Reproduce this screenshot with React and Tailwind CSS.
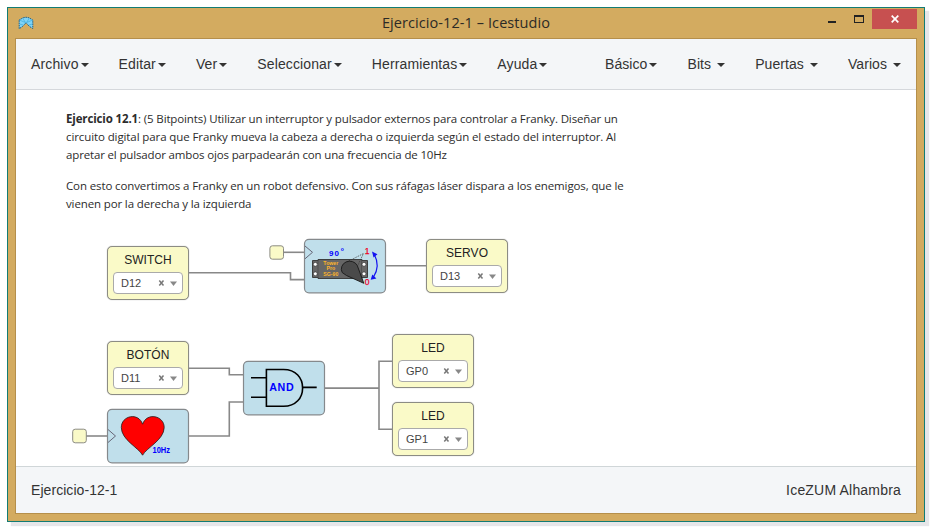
import React from 'react';

const leftMenus = ['Archivo', 'Editar', 'Ver', 'Seleccionar', 'Herramientas', 'Ayuda'];
const rightMenus = ['Básico', 'Bits ', 'Puertas ', 'Varios '];

const pinBlocks = [
  { label: 'SWITCH', pin: 'D12', place: 'left-[91px] top-[156px]' },
  { label: 'SERVO', pin: 'D13', place: 'left-[410px] top-[149px]' },
  { label: 'BOTÓN', pin: 'D11', place: 'left-[91px] top-[251px]' },
  { label: 'LED', pin: 'GP0', place: 'left-[376px] top-[244px]' },
  { label: 'LED', pin: 'GP1', place: 'left-[376px] top-[312px]' },
];

function Menu({ label }) {
  return (
    <button className="flex items-center text-[14px] leading-5 whitespace-pre text-[#333]">
      <span>{label}</span>
      <span className="mt-[2px] ml-[2px] h-0 w-0 border-x-4 border-t-4 border-x-transparent border-t-[#333]" />
    </button>
  );
}

function PinBlock({ label, pin, place }) {
  return (
    <div className={`absolute ${place} flex h-[54px] w-[82px] flex-col items-center rounded-[5px] border border-[#8c8c84] bg-[#fafac8] shadow-[0_0_1px_#999]`}>
      <div className="mt-[5px] text-[12px] leading-4 tracking-[0.05px] text-[#222]">{label}</div>
      <div className="mt-[4px] flex h-[22px] w-[70px] items-center rounded-[4px] border border-[#aaa] bg-white pl-[7px]">
        <span className="w-[37px] text-[11px] leading-4 text-[#444]">{pin}</span>
        <svg width="24" height="8" viewBox="0 0 24 8">
          <path d="M1.300 1.500l4.200 5M5.500 1.500l-4.200 5" stroke="#777" strokeWidth="1.500" />
          <path d="M12 2.600h7l-3.500 4.400z" fill="#888" />
        </svg>
      </div>
    </div>
  );
}

function Circuit() {
  return (
    <svg className="absolute inset-0" width="900" height="376" viewBox="16 90 900 376" fontFamily="'Liberation Sans', Arial, sans-serif">
      <g fill="none" stroke="#888" strokeWidth="1.600">
        <path d="M188 272.700H290.500V279.600H304" />
        <path d="M283 252.300H304" />
        <path d="M385 265.700H427" />
        <path d="M188 368.200H229.300V374.800H244" />
        <path d="M188 436H229.300V402H244" />
        <path d="M86 436H108" />
        <path d="M324 388.100H379M393 361.200H379V429.200H393" />
      </g>
      <g stroke="#8c8c84" fill="#fafac8">
        <rect x="269.900" y="245.800" width="13.600" height="13.400" rx="2.500" />
        <rect x="72.700" y="429.200" width="13.600" height="13.600" rx="2.500" />
      </g>
      <g stroke="#85898c" strokeWidth="1.200" fill="#c0dfeb">
        <rect x="304.500" y="239.300" width="81" height="53.500" rx="4.500" />
        <rect x="107.500" y="409.300" width="81" height="53.500" rx="4.500" />
        <rect x="243.500" y="361.300" width="81" height="53.500" rx="4.500" />
      </g>
      <g fill="none" stroke="#667" strokeWidth="1">
        <path d="M305 246L312.500 252.300L305 258.800" />
        <path d="M108 429.500L115.500 436L108 442.500" />
      </g>

      {/* servo motor */}
      <g>
        <path d="M312.500 260.500H318V259.500H362V260.500H367.500V277.500H362V278.500H318V277.500H312.500Z" fill="#666" stroke="#333" strokeWidth="0.900" />
        <path d="M318 260V278M361.500 260V278" stroke="#444" strokeWidth="0.600" />
        <g fill="#fff" stroke="#222" strokeWidth="0.500">
          <circle cx="315.300" cy="264.300" r="1.900" />
          <circle cx="315.300" cy="273.800" r="1.900" />
          <circle cx="364" cy="264.300" r="1.900" />
          <circle cx="364" cy="273.800" r="1.900" />
        </g>
        <path d="M346.500 262.200L363.500 253.500L357.500 266" fill="none" stroke="#333" strokeWidth="0.700" strokeDasharray="1.500 1" />
        <path d="M342.200 272.500A8 7.500 0 1 1 357.300 265.600L363.800 283.300L346.500 275.500Z" fill="#4a4a4a" stroke="#181818" strokeWidth="0.900" />
        <g fill="#ffb52a" fontSize="5.200" fontWeight="700" textAnchor="middle">
          <text x="330.800" y="265">Tower</text>
          <text x="330.800" y="270.300">Pro</text>
          <text x="330.800" y="276">SG-90</text>
        </g>
        <text x="329" y="256" fontSize="8" fontWeight="700" textLength="10" fill="#00f">90</text>
        <text x="340.700" y="251" fontSize="5" fontWeight="700" fill="#00f">o</text>
        <text x="364.700" y="254.300" fontSize="8.500" stroke="#f0001c" strokeWidth="0.250" fill="#f0001c">1</text>
        <text x="364.700" y="285" fontSize="8.500" stroke="#f00028" strokeWidth="0.250" fill="#f00028">0</text>
        <path d="M374.300 254.500Q380.500 266 373.500 277" fill="none" stroke="#1414f0" strokeWidth="1.200" />
        <path d="M372 251.500L377.500 254.300L373.500 257.500ZM370.700 279.700L372.300 274.600L376.400 278.500Z" fill="#1414f0" />
      </g>

      {/* AND gate */}
      <g fill="none" stroke="#000" strokeWidth="1.600">
        <path d="M266.400 369.500H283.500C296 369.500 302.600 378 302.600 387.900S296 406.300 283.500 406.300H266.400Z" />
        <path d="M251 377.800H266M251 397.300H266M303 387.400H316.700" />
      </g>
      <text x="269.300" y="391" fontSize="10.700" fontWeight="700" letterSpacing="0.600" fill="#00f">AND</text>

      {/* 10 Hz heartbeat */}
      <path d="M142.600 455.200C138.500 447.500 121.500 440 121.300 427.500C121.300 415.500 138.500 412 142.600 424.200C146.700 412 164.200 415.500 164.200 427.500C164 440 146.700 447.500 142.600 455.200Z" fill="#f00" stroke="#222" strokeWidth="0.800" />
      <text x="152.500" y="453" fontSize="8.500" fontWeight="700" textLength="17.500" lengthAdjust="spacingAndGlyphs" fill="#00f">10Hz</text>
    </svg>
  );
}

export default function App() {
  return (
    <div className="h-[530px] w-[933px] overflow-hidden bg-white p-[7px] font-['Liberation_Sans',Arial,sans-serif]">
      <div className="flex h-[515px] w-[918px] flex-col border border-[#127c74] bg-[#d3ab60] px-[7px] pb-[7px] shadow-[4px_4px_1px_#e6e6e9]">
        <header className="grid h-[30px] shrink-0 grid-cols-[1fr_auto_1fr] items-start">
          <svg className="mt-[8px] ml-[3px]" width="16" height="14" viewBox="0 0 16 14">
            <path d="M1.200 4L5 1.800L8 1.200L11 1.800L14.800 4V12.500L11.500 10.500L8 6.800L4.500 10.500L1.200 12.700Z" fill="#7fd3f7" stroke="#1d5f86" strokeWidth="1" strokeDasharray="1.500 0.800" />
            <path d="M1.500 4L6 6L8 6.500L10 6L14.500 4M5 2.500L7 6M11 2.500L9 6M1.500 8L5 9M14.500 8L11 9" fill="none" stroke="#3eaede" strokeWidth="0.700" />
          </svg>
          <h1 className="mt-[5px] font-['Open_Sans',sans-serif] text-[14.500px] leading-[20px] tracking-[0.080px] text-[#2b2a26]">Ejercicio-12-1 – Icestudio</h1>
          <div className="mt-px flex justify-end">
            <svg width="44" height="20" viewBox="0 0 44 20">
              <path d="M0 12H8V14H0Z" fill="#222" />
              <path d="M26 6H36V14H26ZM27 8V13H35V8Z" fillRule="evenodd" fill="#222" />
            </svg>
            <div className="flex h-[20px] w-[45px] items-center justify-center bg-[#c75050]">
              <svg width="8" height="8" viewBox="0 0 8 8">
                <path d="M0.700 0.700L7.300 7.300M7.300 0.700L0.700 7.300" stroke="#fff" strokeWidth="1.700" />
              </svg>
            </div>
          </div>
        </header>
        <div className="flex min-h-0 flex-1 flex-col border border-[#b58f4b] bg-white">
          <nav className="flex h-[51px] shrink-0 items-center justify-between border-b border-[#d5d8dc] bg-[#f4f6f8] px-[15px]">
            <div className="flex gap-[30px] tracking-[0.125px]">{leftMenus.map((m) => <Menu key={m} label={m} />)}</div>
            <div className="flex gap-[30px] tracking-[0.080px]">{rightMenus.map((m) => <Menu key={m} label={m} />)}</div>
          </nav>
          <main className="relative min-h-0 flex-1 overflow-hidden">
            <div className="ml-[50px] pt-[20px] font-['Open_Sans',sans-serif] text-[11.500px] leading-[18px] whitespace-nowrap text-[#2c2c2c]">
              <p>
                <span className="tracking-[-0.135px]"><b>Ejercicio 12.1</b>: (5 Bitpoints) Utilizar un interruptor y pulsador externos para controlar a Franky. Diseñar un</span><br />
                <span className="tracking-[-0.100px]">circuito digital para que Franky mueva la cabeza a derecha o izquierda según el estado del interruptor. Al</span><br />
                <span className="tracking-[-0.150px]">apretar el pulsador ambos ojos parpadearán con una frecuencia de 10Hz</span>
              </p>
              <p className="mt-[13px]">
                <span className="tracking-[-0.120px]">Con esto convertimos a Franky en un robot defensivo. Con sus ráfagas láser dispara a los enemigos, que le</span><br />
                <span className="tracking-[-0.130px]">vienen por la derecha y la izquierda</span>
              </p>
            </div>
            <Circuit />
            {pinBlocks.map((b) => <PinBlock key={b.pin} {...b} />)}
          </main>
          <footer className="flex h-[47px] shrink-0 items-center justify-between border-t border-[#d0d6d8] bg-[#f4f6f8] px-[15px] text-[14px] text-[#333]">
            <span className="tracking-[0.060px]">Ejercicio-12-1</span>
            <span className="tracking-[0.190px]">IceZUM Alhambra</span>
          </footer>
        </div>
      </div>
    </div>
  );
}
